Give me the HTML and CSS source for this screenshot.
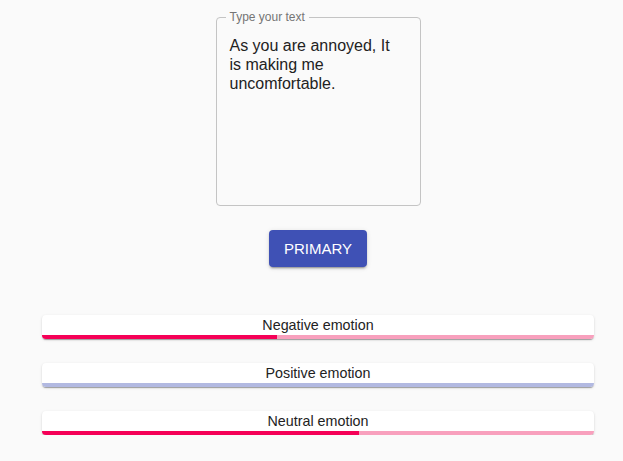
FILE: index.html
```html
<!DOCTYPE html>
<html>
<head>
<meta charset="utf-8">
<link rel="stylesheet" href="styles.css">
</head>
<body>
<div class="page">
  <div class="field-wrap">
    <fieldset class="field">
      <legend class="field-label">Type your text</legend>
      <div class="field-text">As you are annoyed, It is making me uncomfortable.</div>
    </fieldset>
  </div>
  <div class="btn-wrap"><button class="btn">PRIMARY</button></div>
  <div class="cards">
    <div class="card">
      <div class="card-title">Negative emotion</div>
      <div class="bar bar-pink"><div class="bar-fill fill-pink" style="width:42.6%"></div></div>
    </div>
    <div class="card">
      <div class="card-title">Positive emotion</div>
      <div class="bar bar-blue"><div class="bar-fill fill-blue" style="width:0%"></div></div>
    </div>
    <div class="card">
      <div class="card-title">Neutral emotion</div>
      <div class="bar bar-pink"><div class="bar-fill fill-pink" style="width:57.4%"></div></div>
    </div>
  </div>
</div>
</body>
</html>
```
FILE: styles.css
```css
html, body {
  margin: 0;
  padding: 0;
  background: #fafafa;
  font-family: "Liberation Sans", Arial, sans-serif;
  color: rgba(0,0,0,0.87);
}
.page {
  padding: 10px 29px 0 42px;
}
.field-wrap {
  display: flex;
  justify-content: center;
}
.field {
  box-sizing: border-box;
  width: 205px;
  height: 196px;
  margin: 0;
  padding: 12px 22px 0 13px;
  border: 1px solid #c4c4c4;
  border-radius: 4px;
}
.field-label {
  font-size: 12px;
  color: #757575;
  padding: 0 4px;
  margin-left: -4px;
  line-height: 14px;
}
.field-text {
  font-size: 16px;
  line-height: 19px;
  color: #222;
}
.btn-wrap {
  display: flex;
  justify-content: center;
  margin-top: 24px;
}
.btn {
  width: 98px;
  height: 37px;
  background: #3f51b5;
  color: #fff;
  border: none;
  border-radius: 4px;
  font-family: "Liberation Sans", Arial, sans-serif;
  font-size: 15px;
  padding: 0;
  box-shadow: 0 3px 1px -2px rgba(0,0,0,0.2), 0 2px 2px 0 rgba(0,0,0,0.14), 0 1px 5px 0 rgba(0,0,0,0.12);
}
.cards {
  margin-top: 48px;
  display: flex;
  flex-direction: column;
  gap: 24px;
}
.card {
  background: #fff;
  border-radius: 4px;
  overflow: hidden;
  box-shadow: 0 2px 1px -1px rgba(0,0,0,0.2), 0 1px 1px 0 rgba(0,0,0,0.14), 0 1px 3px 0 rgba(0,0,0,0.12);
}
.card-title {
  text-align: center;
  font-size: 14.3px;
  line-height: 16px;
  padding-top: 2px;
  padding-bottom: 2px;
  color: #222;
}
.bar {
  height: 4px;
}
.bar-fill { height: 100%; }
.bar-pink { background: #f8a0bd; }
.fill-pink { background: #f50057; }
.bar-blue { background: #b2b9e1; }
.fill-blue { background: #3f51b5; }
```
